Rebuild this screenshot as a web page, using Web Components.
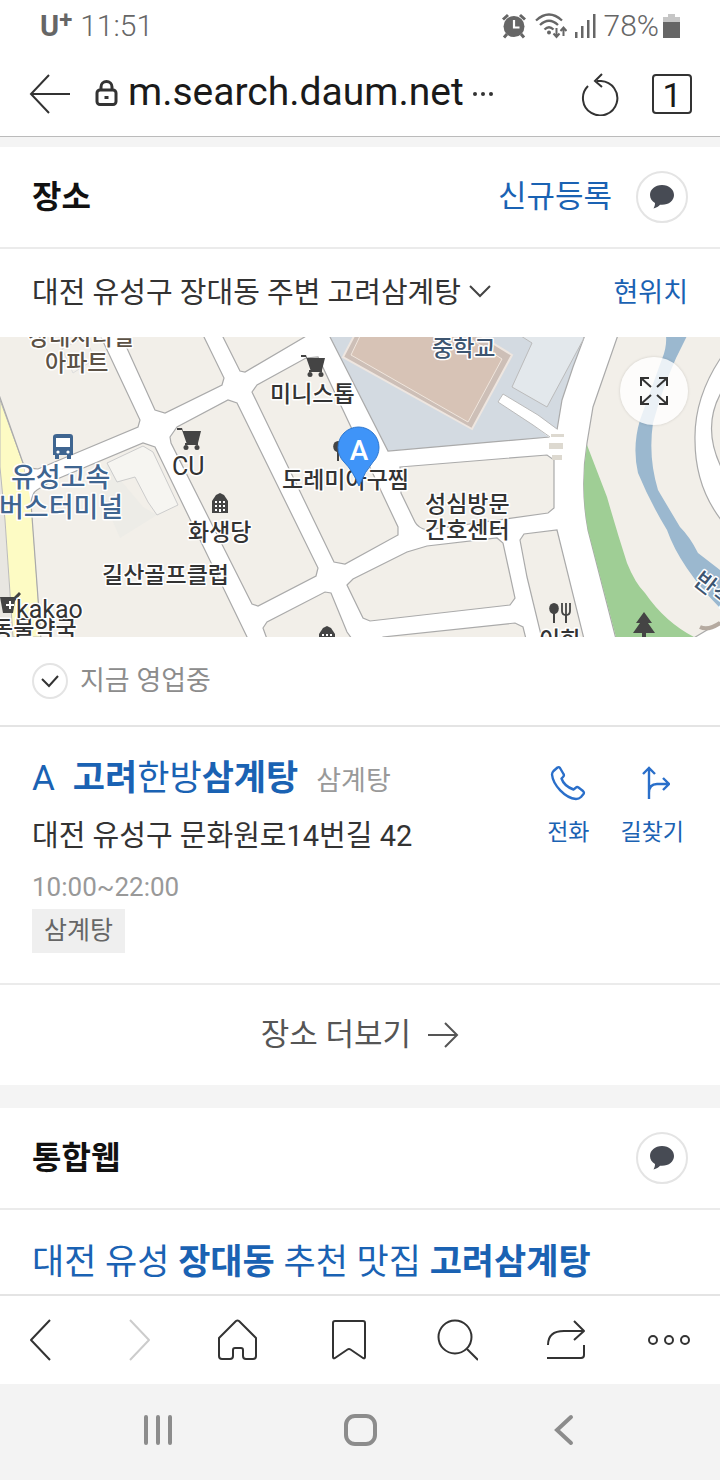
<!DOCTYPE html>
<html lang="ko">
<head>
<meta charset="utf-8">
<meta name="viewport" content="width=device-width, initial-scale=1">
<title>장소 검색</title>
<style>
  body{
    margin: 0;
    background: #fff;
    color: #333;
    font-family: Roboto, "Noto Sans CJK KR", sans-serif;
    --link: #1a62b3;
    --line: #ebebeb;
    --band: #f4f4f4;
  }
</style>
</head>
<body>
<search-page></search-page>

<script>
const baseStyle = `
  *{
    box-sizing: border-box;
  }
  svg{
    display: block;
    flex: none;
  }
  button{
    margin: 0;
    padding: 0;
    border: 0;
    background: none;
    color: inherit;
    font: inherit;
    cursor: pointer;
  }
  a{
    color: var(--link);
    text-decoration: none;
  }
`;

function define(name, html) {
  const template = document.createElement('template');
  template.innerHTML = `<style>${baseStyle}</style>${html}`;

  customElements.define(name, class extends HTMLElement {
    constructor() {
      super();
      this.attachShadow({ mode: 'open' });
      this.shadowRoot.appendChild(template.content.cloneNode(true));
    }
  });
}

define('status-bar', `
<style>
  :host{
    display: flex;
    align-items: center;
    justify-content: space-between;
    padding: 8px 40px;
    color: #666;
    font-size: 30px;
    font-weight: 300;
    line-height: 36px;
  }
  .side{
    display: flex;
    align-items: center;
    gap: 8px;
  }
  .carrier{
    display: flex;
    align-items: flex-start;
    font-weight: 700;
    font-size: 29px;
  }
  .carrier sup{
    font-size: 24px;
    line-height: 24px;
  }
  .power{
    display: flex;
    align-items: center;
    gap: 4px;
  }
</style>
<div class="side">
  <span class="carrier">U<sup>+</sup></span>
  <span>11:51</span>
</div>
<div class="side">
  <svg width="26" height="26" viewBox="0 0 26 26" fill="none" stroke="#666">
    <circle cx="13" cy="13.500" r="10.500" fill="#666" stroke="none"/>
    <path d="M2 6.500L7 2M24 6.500L19 2" stroke-width="3"/>
    <path d="M6 21l-3 3.500M20 21l3 3.500" stroke-width="3"/>
    <path d="M13 7v7.500h5.500" stroke="#fff" stroke-width="2.200"/>
  </svg>
  <svg width="32" height="26" viewBox="0 0 32 26" fill="none" stroke="#666" stroke-width="2.300">
    <path d="M1 7.500Q14-4.500 27 7.500M5 12Q14 3.500 23 12M9.500 16.500Q14 12 18.500 16.500"/>
    <circle cx="14" cy="19.500" r="2" fill="#666" stroke="none"/>
    <path d="M21.500 15v8.500M18.500 20.500l3 3.500 3-3.500M28.500 23v-8.500M25.500 18l3-3.500 3 3.500" stroke-width="2"/>
  </svg>
  <svg width="21" height="24" viewBox="0 0 21 24" fill="#666">
    <path d="M0 18h2.500v6H0zM6 12h2.500v12H6zM12 6h2.500v18H12zM18 0h2.500v24H18z"/>
  </svg>
  <span class="power">
    <span>78%</span>
    <svg width="17" height="26" viewBox="0 0 17 26">
      <path d="M5 1h7v3h5v5H0V4h5z" fill="#c6c6c6"/>
      <path d="M0 9h17v16H0z" fill="#666"/>
    </svg>
  </span>
</div>
`);

define('address-bar', `
<style>
  :host{
    display: flex;
    align-items: center;
    padding: 17px 28px 17px 29px;
    border-bottom: 1px solid #bbb;
    color: #1a1a1a;
  }
  .url{
    display: flex;
    align-items: center;
    flex: auto;
    gap: 9px;
    margin-left: 24px;
    font-size: 39px;
    line-height: 46px;
  }
  .url span{
    padding-bottom: 4px;
  }
  .reload{
    margin-right: 32px;
  }
  .tabs{
    width: 40px;
    height: 40px;
    border: 2px solid #333;
    border-radius: 4px;
    font-size: 34px;
    line-height: 38px;
  }
</style>
<button aria-label="뒤로">
  <svg width="42" height="42" viewBox="0 0 42 42" fill="none" stroke="#333" stroke-width="2">
    <path d="M41 21H2M20 2L2 21l18 19"/>
  </svg>
</button>
<button class="url">
  <svg width="24" height="28" viewBox="0 0 24 28" fill="none" stroke="#333" stroke-width="3">
    <rect x="2" y="10" width="19" height="14.500" rx="3"/>
    <path d="M6 10V7a5.500 5.500 0 0 1 11 0v3"/>
    <path d="M9.500 17.500h4"/>
  </svg>
  <span>m.search.daum.net</span>
  <svg width="22" height="6" viewBox="0 0 22 6" fill="#333">
    <circle cx="2" cy="3" r="2"/><circle cx="10" cy="3" r="2"/><circle cx="18" cy="3" r="2"/>
  </svg>
</button>
<button class="reload" aria-label="새로고침">
  <svg width="40" height="44" viewBox="0 0 40 44" fill="none" stroke="#333" stroke-width="2">
    <path d="M8 14A17.200 17.200 0 1 0 21 9h-4"/>
    <path d="M22 2l-7 7 7 6"/>
  </svg>
</button>
<button class="tabs" aria-label="탭 1개">1</button>
`);

define('section-header', `
<style>
  :host{
    display: flex;
    align-items: center;
    gap: 24px;
    padding: 24px 32px;
    border-bottom: 2px solid var(--line);
  }
  h2{
    flex: auto;
    margin: 0;
    color: #111;
    font-size: 32px;
    font-weight: 700;
    line-height: 48px;
  }
  .talk{
    display: flex;
    align-items: center;
    justify-content: center;
    width: 52px;
    height: 52px;
    border: 2px solid #e4e4e4;
    border-radius: 50%;
  }
</style>
<h2><slot></slot></h2>
<slot name="action"></slot>
<button class="talk" aria-label="의견 보내기">
  <svg width="26" height="26" viewBox="0 0 26 26" fill="#474b54">
    <path d="M13 1C6 1 1 5.500 1 11c0 3.500 2 6.300 5 8 0 2-.4 3.500-1.500 5.500 3-.8 5-2.200 6.500-3.800l2 .1c7 0 12-4.300 12-9.800S20 1 13 1z"/>
  </svg>
</button>
`);

define('location-row', `
<style>
  :host{
    display: flex;
    align-items: center;
    justify-content: space-between;
    padding: 22px 32px;
  }
  .area{
    display: flex;
    align-items: center;
    gap: 8px;
  }
  select{
    margin: 0;
    padding: 0;
    border: 0;
    appearance: none;
    background: none;
    color: #333;
    font: inherit;
    font-size: 29px;
    line-height: 44px;
  }
  a{
    font-size: 27px;
    line-height: 40px;
  }
</style>
<label class="area">
  <select aria-label="검색 지역">
    <option>대전 유성구 장대동 주변 고려삼계탕</option>
  </select>
  <svg width="22" height="16" viewBox="0 0 22 16" fill="none" stroke="#444" stroke-width="2">
    <path d="M1 1l10 10L21 1"/>
  </svg>
</label>
<a href="#here">현위치</a>
`);

define('place-map', `
<style>
  :host{
    display: block;
    position: relative;
  }
  .map{
    width: 100%;
    height: 300px;
    background: #fff;
  }
  .block{
    fill: #f2efe9;
    stroke: #aaa;
    stroke-width: 1.2;
  }
  text{
    fill: #333;
    stroke: #fff;
    stroke-width: 3px;
    stroke-linejoin: round;
    paint-order: stroke;
    font-size: 23px;
    font-weight: 500;
  }
  .apt{
    fill: #5b5145;
  }
  .stop{
    fill: #3f6590;
    font-size: 27px;
  }
  .school{
    fill: #3d5570;
  }
  .latin{
    font-size: 25px;
    font-weight: 400;
  }
  .pinText{
    fill: #fff;
    stroke: none;
    font-size: 28px;
  }
  .expand{
    position: absolute;
    top: 20px;
    right: 32px;
    display: flex;
    align-items: center;
    justify-content: center;
    width: 68px;
    height: 68px;
    border-radius: 50%;
    background: rgba(255, 255, 255, 0.8);
    box-shadow: 0 0 3px rgba(0, 0, 0, 0.15);
  }
</style>
<svg class="map" viewBox="0 0 720 300" preserveAspectRatio="xMidYMid slice" role="img" aria-label="지도">
  <defs>
    <g id="cart">
      <path d="M0 1h5l1 3h18l-3 12H9.500L5 3H0z" fill="#444"/>
      <path d="M8 17h13" stroke="#444" stroke-width="2"/>
      <circle cx="9" cy="20.500" r="2.500" fill="#444"/><circle cx="20" cy="20.500" r="2.500" fill="#444"/>
    </g>
    <g id="hall">
      <path d="M0 20V8l4-6 4-2 4 2 4 6v12z" fill="#444"/>
      <path d="M3 8h2v2H3zM7 8h2v2H7zM11 8h2v2h-2zM3 12h2v2H3zM7 12h2v2H7zM11 12h2v2h-2zM3 16h2v2H3zM7 16h2v3H7zM11 16h2v2h-2z" fill="#fff"/>
    </g>
    <g id="food" fill="#444">
      <ellipse cx="5" cy="5.500" rx="4.800" ry="5.500"/>
      <path d="M4 10h2v10H4zM16 11h2v9h-2z"/>
      <path d="M13 0v8q0 4 4 4t4-4V0M17 0v12" fill="none" stroke="#444" stroke-width="1.800"/>
    </g>
  </defs>

  <path d="M0 63V300H13L5 183z" fill="#e8e6e1"/>
  <path d="M0 63L23 126 31 160 41 300H13L5 183 0 130z" fill="#fdfbc4" stroke="#bbb"/>
  <path d="M24 130L50 133 50 145 37 153 31 166z" fill="#fff"/>

  <path class="block" d="M-2 -2V55L23 126Q30 132 38 132L138 90 140 83 100 -2z"/>
  <path class="block" d="M121 -2L155 73 165 76 222 48 224 41 203 -2z"/>
  <path class="block" d="M222 -2L240 34 245 35 308 -2z"/>
  <path class="block" d="M31 166Q32 156 37 153L50 145 143 106 155 110 248 302H41z"/>
  <path class="block" d="M170 100L177 90 228 63 237 66 318 231 316 239 258 269 252 267 171 106z"/>
  <path class="block" d="M252 55L257 48 306 21 318 20 398 190 398 198 345 227 334 225z"/>
  <path class="block" d="M347 248L353 242 407 215 427 209 497 201 503 206 515 261 510 268 370 284 363 281z"/>
  <path class="block" d="M263 291L267 285 325 255 331 256 347 295 352 302H267z"/>
  <path class="block" d="M383 302V300L515 286 523 290 526 302z"/>
  <path class="block" d="M400 130L547 118 554 123V171L548 176 427 193Q418 191 415 185L401 156z"/>
  <path class="block" d="M520 203L524 197 557 193 584 302H542L527 240z"/>
  <path class="block" d="M618 -2L593 70 587 106Q580 150 588 193L616 302H692L722 284V184Q695 150 695 103 694 60 722 19V-2z"/>
  <path class="block" d="M722 54Q701 90 722 132z"/>

  <path d="M107 127L143 170 157 178 120 201 100 155z" fill="#edece7"/>
  <path d="M107 126L143 109 153 115 178 168 157 178 148 165 135 140 117 145z" fill="#f6f5f1" stroke="#ccc"/>
  <path d="M62 12L85 0 95 22 73 36z" fill="none" stroke="#ddd"/>

  <path d="M329 -2L388 114 550 100 557 93 562 63 573 30 585 -2z" fill="#d3dae1" stroke="#aaa" stroke-width="1.200"/>
  <path d="M521 -1L532 6 512 50 547 70 583 3 584 -1z" fill="#e3e8ec" stroke="#bbb"/>
  <path d="M354 -1L343 20 472 92 512 18 481 -1z" fill="#cdbfb7" stroke="#eee6e0" stroke-width="2"/>
  <path d="M360 -1L351 18 468 85 502 22 466 -1z" fill="#d7c3b6" stroke="#f0e6dd"/>
  <path d="M498 65L503 57 538 78 558 93 559 101 550 101 533 88z" fill="#fff"/>
  <path d="M498 65L503 57 538 78 557 92M498 65L533 88 550 100" fill="none" stroke="#bbb"/>
  <path d="M551 97h13v3h-13zM549 106h14v6h-14zM552 118h10v5h-10z" fill="#ddd9d0"/>

  <path d="M587 108Q580 150 588 193L616 300H694Q665 285 645 256 635 246 627 226 617 195 607 160z" fill="#9fce95"/>
  <path d="M666 -1Q667 10 662 22L640 83Q632 110 638 136 650 165 667 193 680 230 720 271V233L698 216Q690 200 680 190 665 165 658 153 648 120 653 86 665 40 687 -1z" fill="#9bb8cf"/>
  <path d="M700 290q8 4 20-4" fill="none" stroke="#b5aaa0" stroke-width="4"/>

  <path d="M57 97h13q3 0 3 3v18h-2v4h-4v-4h-8v4h-4v-4h-2v-18q0-3 4-3z" fill="#3f6590"/>
  <path d="M56 101h14v9H56z" fill="#fff"/>
  <circle cx="58" cy="115" r="1.600" fill="#fff"/><circle cx="68" cy="115" r="1.600" fill="#fff"/>
  <use href="#cart" x="177" y="90"/>
  <use href="#cart" x="301" y="17"/>
  <use href="#hall" x="212" y="156"/>
  <use href="#hall" x="319" y="289"/>
  <use href="#food" x="549" y="266"/>
  <use href="#food" x="333" y="104"/>
  <path d="M0 260h14l5-5 2 2-6 7-2 12H3z" fill="#444"/>
  <path d="M10 264v8M6 268h8" stroke="#fff" stroke-width="2"/>
  <path d="M644 275l8 11h-4l7 10h-9v5h-4v-5h-9l7-10h-4z" fill="#444"/>

  <text class="apt" x="28" y="8">장대시티빌</text>
  <text class="apt" x="45" y="34">아파트</text>
  <text x="270" y="65">미니스톱</text>
  <text class="latin" x="172" y="138">CU</text>
  <text class="stop" x="11" y="150">유성고속</text>
  <text class="stop" x="-1" y="180">버스터미널</text>
  <text x="188" y="203">화생당</text>
  <text x="102" y="246">길산골프클럽</text>
  <text x="282" y="151">도레미아구찜</text>
  <text x="425" y="175">성심방문</text>
  <text x="425" y="201">간호센터</text>
  <text class="school" x="432" y="19">중학교</text>
  <text x="-8" y="300">동물약국</text>
  <text class="latin" x="16" y="281">kakao</text>
  <text x="539" y="311">이화</text>
  <text class="school" transform="translate(692 246) rotate(38)">반석천</text>

  <path d="M359 149Q353 134 344 125A20.500 20.500 0 1 1 373 125Q365 134 359 149z" fill="#3f94f8" stroke="#2c76cf"/>
  <text class="pinText" x="359" y="123" text-anchor="middle">A</text>
</svg>
<button class="expand" aria-label="지도 크게 보기">
  <svg width="30" height="30" viewBox="0 0 30 30" fill="none" stroke="#333" stroke-width="2">
    <path d="M2 10V2h8M2 2l10 9M20 2h8v8M28 2l-10 9M2 20v8h8M2 28l10-9M28 20v8h-8M28 28l-10-9"/>
  </svg>
</button>
`);

define('open-filter', `
<style>
  :host{
    display: block;
    padding: 24px 32px;
    border-bottom: 2px solid #e4e4e4;
  }
  label{
    display: flex;
    align-items: center;
    gap: 12px;
    color: #8c8c8c;
    font-size: 27px;
    line-height: 40px;
  }
  .tick{
    display: grid;
    place-items: center;
    border: 2px solid #e4e4e4;
    border-radius: 50%;
  }
  .tick > *{
    grid-area: 1 / 1;
  }
  input{
    width: 32px;
    height: 32px;
    margin: 0;
    appearance: none;
  }
</style>
<label>
  <span class="tick">
    <input type="checkbox">
    <svg width="20" height="14" viewBox="0 0 20 14" fill="none" stroke="#333" stroke-width="2">
      <path d="M2 5l7 7 9-10"/>
    </svg>
  </span>
  <span><slot></slot></span>
</label>
`);

define('place-item', `
<style>
  :host{
    display: flex;
    justify-content: space-between;
    padding: 29px 36px 30px 32px;
    border-bottom: 2px solid var(--line);
  }
  .name{
    display: flex;
    align-items: baseline;
    gap: 18px;
    font-size: 35px;
    line-height: 46px;
  }
  h3{
    margin: 0;
    font: inherit;
  }
  .mark{
    color: var(--link);
  }
  .kind{
    color: #999;
    font-size: 27px;
  }
  .address{
    margin-top: 12px;
    font-size: 29px;
    line-height: 40px;
  }
  .hours{
    margin-top: 15px;
    color: #999;
    font-size: 26px;
    line-height: 32px;
  }
  .tag{
    display: inline-block;
    margin-top: 6px;
    padding: 0 12px;
    background: #efefef;
    color: #666;
    font-size: 25px;
    line-height: 44px;
    vertical-align: top;
  }
  .actions{
    display: flex;
    align-items: flex-start;
    gap: 31px;
    padding-top: 9px;
  }
  .actions a{
    display: flex;
    flex-direction: column;
    align-items: center;
    gap: 16px;
    font-size: 23px;
    line-height: 32px;
  }
</style>
<div>
  <div class="name">
    <span class="mark">A</span>
    <h3><a href="#place"><slot></slot></a></h3>
    <span class="kind"><slot name="kind"></slot></span>
  </div>
  <div class="address"><slot name="address"></slot></div>
  <div class="hours"><slot name="hours"></slot></div>
  <span class="tag"><slot name="tag"></slot></span>
</div>
<div class="actions">
  <a href="#call">
    <svg width="36" height="36" viewBox="0 0 36 36" fill="none" stroke="#2a6fca" stroke-width="2.400" stroke-linejoin="round">
      <path d="M7.500 2.500L3.500 6Q2 7.500 2 9.500C3 20 15 33 26 34q3 0 5-2l2.500-3q1-1.500-.5-3l-4.500-3.500q-1.500-1-3 .5l-2 1.500C18 22.500 13 18 11.500 13.500L13 12q1.500-1.500.5-3L10 3q-1-1.500-2.500-.5z"/>
    </svg>
    전화
  </a>
  <a href="#route">
    <svg width="36" height="36" viewBox="0 0 36 36" fill="none" stroke="#2a6fca" stroke-width="2.400">
      <path d="M15 34V3M9 9l6-6 6 6M15 28q0-9 8-9h12M29 13l6 6-6 6"/>
    </svg>
    길찾기
  </a>
</div>
`);

define('more-link', `
<style>
  :host{
    display: block;
  }
  a{
    display: flex;
    align-items: center;
    justify-content: center;
    gap: 16px;
    padding: 28px 32px;
    color: #555;
    font-size: 31px;
    line-height: 44px;
  }
</style>
<a href="#more">
  <slot></slot>
  <svg width="32" height="28" viewBox="0 0 32 28" fill="none" stroke="#555" stroke-width="2">
    <path d="M1 14h29M18 2l12 12-12 12"/>
  </svg>
</a>
`);

define('web-result', `
<style>
  :host{
    display: block;
    padding: 29px 32px 6px;
    font-size: 35px;
    line-height: 48px;
  }
</style>
<a href="#result"><slot></slot></a>
`);

define('browser-toolbar', `
<style>
  :host{
    display: grid;
    grid-template-columns: 9fr 10fr 10fr 11fr 11fr 11fr 10fr;
    padding: 22px 0;
    border-top: 2px solid #e4e4e4;
    background: #fff;
  }
  button{
    display: flex;
    justify-content: center;
  }
  svg{
    fill: none;
    stroke: #333;
    stroke-width: 2;
    stroke-linejoin: round;
  }
</style>
<button aria-label="이전">
  <svg width="44" height="44" viewBox="0 0 44 44"><path d="M27 2L8 22l19 20"/></svg>
</button>
<button aria-label="다음" disabled>
  <svg width="44" height="44" viewBox="0 0 44 44" style="stroke: #ccc"><path d="M12 2l19 20-19 20"/></svg>
</button>
<button aria-label="홈">
  <svg width="44" height="44" viewBox="0 0 44 44">
    <path d="M1 20L18 3q1.500-1 3 0l17 17v18q0 3-3 3h-7q-3 0-3-3v-6q0-2-2-2h-6q-2 0-2 2v6q0 3-3 3H4q-3 0-3-3z"/>
  </svg>
</button>
<button aria-label="북마크">
  <svg width="44" height="44" viewBox="0 0 44 44">
    <path d="M10 5q0-2 2-2h28q2 0 2 2v34q0 2-2 1L27.500 31.500q-1.500-1-3 0L12 40q-2 1-2-1z"/>
  </svg>
</button>
<button aria-label="검색">
  <svg width="46" height="44" viewBox="0 0 46 44"><circle cx="23" cy="19" r="16.500"/><path d="M35 31l11 11"/></svg>
</button>
<button aria-label="공유">
  <svg width="44" height="44" viewBox="0 0 44 44">
    <path d="M5 27q0-14 16-14h20M31 3l10 10-10 9M4 40h34q3 0 3-3V27"/>
  </svg>
</button>
<button aria-label="더보기">
  <svg width="44" height="44" viewBox="0 0 44 44"><circle cx="5" cy="22" r="4"/><circle cx="21" cy="22" r="4"/><circle cx="37" cy="22" r="4"/></svg>
</button>
`);

define('system-nav', `
<style>
  :host{
    display: flex;
    padding: 26px 8% 30px;
    background: #f3f3f3;
  }
  button{
    display: flex;
    flex: 1;
    justify-content: center;
  }
  svg{
    fill: none;
    stroke: #8c8c8c;
    stroke-width: 4;
    stroke-linecap: round;
  }
</style>
<button aria-label="최근 앱">
  <svg width="40" height="40" viewBox="0 0 40 40"><path d="M8 7v26M20 7v26M32 7v26"/></svg>
</button>
<button aria-label="홈 화면">
  <svg width="40" height="40" viewBox="0 0 40 40"><rect x="6" y="6" width="29" height="28" rx="9"/></svg>
</button>
<button aria-label="뒤로 가기">
  <svg width="40" height="40" viewBox="0 0 40 40"><path d="M29 7L15 20l14 13"/></svg>
</button>
`);

define('search-page', `
<style>
  :host{
    display: flex;
    flex-direction: column;
    min-height: 100vh;
  }
  main{
    flex: auto;
  }
  .places{
    border-top: 10px solid var(--band);
  }
  .web{
    border-top: 23px solid var(--band);
  }
  .register{
    font-size: 31px;
    line-height: 44px;
  }
  b{
    font-weight: 700;
  }
</style>
<status-bar></status-bar>
<address-bar></address-bar>
<main>
  <section class="places">
    <section-header>
      장소
      <a class="register" slot="action" href="#register">신규등록</a>
    </section-header>
    <location-row></location-row>
    <place-map></place-map>
    <open-filter>지금 영업중</open-filter>
    <place-item>
      <b>고려</b>한방<b>삼계탕</b>
      <span slot="kind">삼계탕</span>
      <span slot="address">대전 유성구 문화원로14번길 42</span>
      <span slot="hours">10:00~22:00</span>
      <span slot="tag">삼계탕</span>
    </place-item>
    <more-link>장소 더보기</more-link>
  </section>
  <section class="web">
    <section-header>통합웹</section-header>
    <web-result>대전 유성 <b>장대동</b> 추천 맛집 <b>고려삼계탕</b></web-result>
  </section>
</main>
<browser-toolbar></browser-toolbar>
<system-nav></system-nav>
`);
</script>
</body>
</html>
